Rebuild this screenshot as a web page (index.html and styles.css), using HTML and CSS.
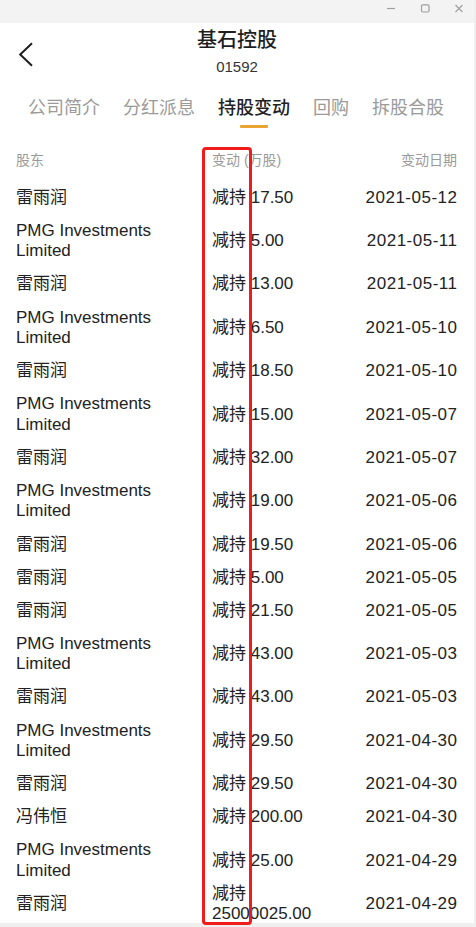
FILE: index.html
```
<!DOCTYPE html>
<html lang="zh-CN">
<head>
<meta charset="utf-8">
<title>基石控股</title>
<link rel="stylesheet" href="styles.css">
</head>
<body>
<div class="window">
  <div class="titlebar">
    <span class="ctl"><svg width="10" height="9" viewBox="0 0 10 9"><path d="M1 4.5H9" stroke="#a0a0a0" stroke-width="1.2"/></svg></span>
    <span class="ctl"><svg width="10" height="9" viewBox="0 0 10 9"><rect x="1.5" y="0.8" width="7.5" height="7.2" rx="1.2" fill="none" stroke="#a0a0a0" stroke-width="1.2"/></svg></span>
    <span class="ctl"><svg width="10" height="9" viewBox="0 0 10 9"><path d="M1.5 1L8.5 8M8.5 1L1.5 8" stroke="#a0a0a0" stroke-width="1.1"/></svg></span>
  </div>
  <div class="app">
    <header class="nav">
      <span class="back"><svg width="16" height="25" viewBox="0 0 16 25"><path d="M14 1.2L2.2 12.5L14 23.8" fill="none" stroke="#1e1e1e" stroke-width="2"/></svg></span>
      <div class="nav-title">
        <div class="title">基石控股</div>
        <div class="code">01592</div>
      </div>
      <span></span>
    </header>
    <nav class="tabs">
      <div class="tab">公司简介</div>
      <div class="tab">分红派息</div>
      <div class="tab active">持股变动<span class="bar"></span></div>
      <div class="tab">回购</div>
      <div class="tab">拆股合股</div>
    </nav>
    <div class="table">
      <div class="row head">
        <div>股东</div>
        <div>变动 (万股)</div>
        <div class="date">变动日期</div>
      </div>
      <div class="row"><div>雷雨润</div><div class="chg"><span>减持 <span class="num">17.50</span></span></div><div class="date">2021-05-12</div></div>
      <div class="row"><div>PMG Investments Limited</div><div class="chg"><span>减持 <span class="num">5.00</span></span></div><div class="date">2021-05-11</div></div>
      <div class="row"><div>雷雨润</div><div class="chg"><span>减持 <span class="num">13.00</span></span></div><div class="date">2021-05-11</div></div>
      <div class="row"><div>PMG Investments Limited</div><div class="chg"><span>减持 <span class="num">6.50</span></span></div><div class="date">2021-05-10</div></div>
      <div class="row"><div>雷雨润</div><div class="chg"><span>减持 <span class="num">18.50</span></span></div><div class="date">2021-05-10</div></div>
      <div class="row"><div>PMG Investments Limited</div><div class="chg"><span>减持 <span class="num">15.00</span></span></div><div class="date">2021-05-07</div></div>
      <div class="row"><div>雷雨润</div><div class="chg"><span>减持 <span class="num">32.00</span></span></div><div class="date">2021-05-07</div></div>
      <div class="row"><div>PMG Investments Limited</div><div class="chg"><span>减持 <span class="num">19.00</span></span></div><div class="date">2021-05-06</div></div>
      <div class="row"><div>雷雨润</div><div class="chg"><span>减持 <span class="num">19.50</span></span></div><div class="date">2021-05-06</div></div>
      <div class="row"><div>雷雨润</div><div class="chg"><span>减持 <span class="num">5.00</span></span></div><div class="date">2021-05-05</div></div>
      <div class="row"><div>雷雨润</div><div class="chg"><span>减持 <span class="num">21.50</span></span></div><div class="date">2021-05-05</div></div>
      <div class="row"><div>PMG Investments Limited</div><div class="chg"><span>减持 <span class="num">43.00</span></span></div><div class="date">2021-05-03</div></div>
      <div class="row"><div>雷雨润</div><div class="chg"><span>减持 <span class="num">43.00</span></span></div><div class="date">2021-05-03</div></div>
      <div class="row"><div>PMG Investments Limited</div><div class="chg"><span>减持 <span class="num">29.50</span></span></div><div class="date">2021-04-30</div></div>
      <div class="row"><div>雷雨润</div><div class="chg"><span>减持 <span class="num">29.50</span></span></div><div class="date">2021-04-30</div></div>
      <div class="row"><div>冯伟恒</div><div class="chg"><span>减持 <span class="num">200.00</span></span></div><div class="date">2021-04-30</div></div>
      <div class="row"><div>PMG Investments Limited</div><div class="chg"><span>减持 <span class="num">25.00</span></span></div><div class="date">2021-04-29</div></div>
      <div class="row"><div>雷雨润</div><div class="chg"><span>减持 <span class="num">25000025.00</span></span></div><div class="date">2021-04-29</div></div>
    </div>
  </div>
</div>
<div class="highlight"></div>
</body>
</html>
```
FILE: styles.css
```
html, body {
  margin: 0;
  padding: 0;
  background: #ffffff;
}
body {
  position: relative;
  width: 476px;
  height: 927px;
  overflow: hidden;
  font-family: "Liberation Sans", "Noto Sans CJK SC", sans-serif;
  color: #222222;
}
.window {
  width: 476px;
  height: 927px;
  box-sizing: border-box;
  border-right: 2px solid #efefef;
  border-bottom: 4px solid #efefef;
  overflow: hidden;
  background: #ffffff;
}
.titlebar {
  height: 23px;
  background: #f3f3f3;
  display: flex;
  justify-content: flex-end;
  align-items: flex-start;
  margin-right: -2px;
}
.ctl {
  width: 34px;
  height: 17px;
  display: flex;
  align-items: center;
  justify-content: center;
}
.ctl svg { display: block; }
.nav {
  display: grid;
  grid-template-columns: 1fr auto 1fr;
  padding-top: 4px;
}
.back {
  margin-top: 15px;
  margin-left: 18px;
  width: 16px;
  height: 25px;
}
.back svg { display: block; }
.nav-title {
  text-align: center;
}
.title {
  font-size: 20px;
  line-height: 26px;
  font-weight: 500;
  color: #1e1e1e;
}
.code {
  margin-top: 4px;
  font-size: 15px;
  line-height: 20px;
  color: #333333;
}
.tabs {
  display: flex;
  align-items: flex-start;
  gap: 23px;
  padding: 19px 0 0 28px;
}
.tab {
  display: flex;
  flex-direction: column;
  align-items: center;
  font-size: 18px;
  line-height: 24px;
  color: #9a9a9a;
  white-space: nowrap;
}
.tab.active {
  color: #222222;
  font-weight: 500;
}
.bar {
  width: 28px;
  height: 3px;
  margin-top: 5px;
  background: #e9a431;
  border-radius: 1px;
}
.table {
  padding: 22px 17px 0 16px;
}
.row {
  display: grid;
  grid-template-columns: 180px 110px 1fr;
  column-gap: 16px;
  align-items: center;
  padding: 6.3px 0;
  font-size: 17px;
  line-height: 20.5px;
  color: #222222;
}
.row.head {
  padding: 0 0 11.5px 0;
  font-size: 14px;
  line-height: 20px;
  color: #9a9a9a;
}
.date {
  text-align: right;
}
.row .date {
  letter-spacing: 0.5px;
  margin-right: -0.5px;
}
.row.head .date {
  letter-spacing: 0;
  margin-right: 0;
}
.chg {
  height: 20.5px;
  display: flex;
  align-items: center;
}
.highlight {
  position: absolute;
  left: 202px;
  top: 147px;
  width: 50px;
  height: 778px;
  box-sizing: border-box;
  border: 3px solid #f01c1c;
  border-radius: 4px;
  pointer-events: none;
}
```
